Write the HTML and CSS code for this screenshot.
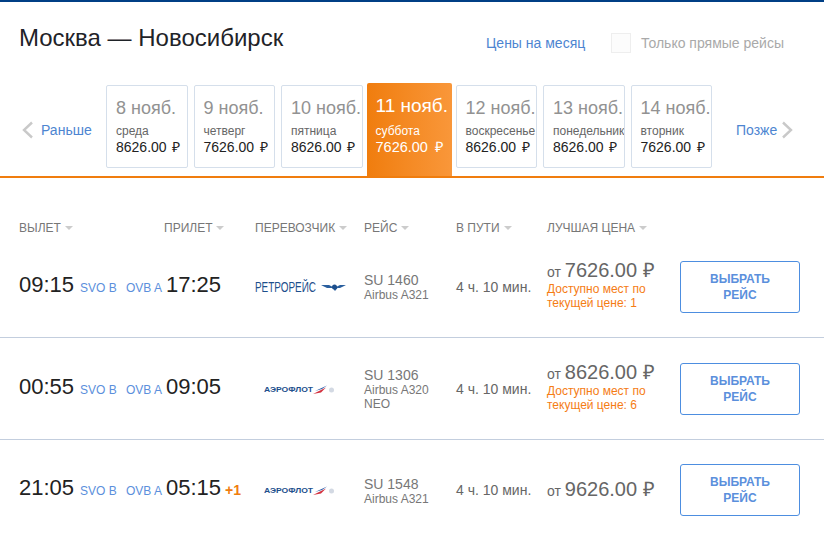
FILE: index.html
```html
<!DOCTYPE html>
<html lang="ru">

<head>
    <meta charset="UTF-8">
    <title>Москва — Новосибирск</title>
    <link rel="stylesheet" href="styles.css">
</head>

<body>
    <div class="top">
        <div class="top-head">
            <h1>Москва — Новосибирск</h1>
            <a class="month-link">Цены на месяц</a>
            <span class="check"></span>
            <span class="check-label">Только прямые рейсы</span>
        </div>

        <div class="dates">
            <a class="nav nav-prev">
                <svg width="13" height="18" viewBox="0 0 13 18"><path d="M11 1.500 3 9l8 7.500" fill="none" stroke="#c9c9c9" stroke-width="2.400"/></svg>
                Раньше
            </a>
            <div class="day">
                <div class="day-date">8 нояб.</div>
                <div class="day-name">среда</div>
                <div class="day-price">8626.00 ₽</div>
            </div>
            <div class="day">
                <div class="day-date">9 нояб.</div>
                <div class="day-name">четверг</div>
                <div class="day-price">7626.00 ₽</div>
            </div>
            <div class="day">
                <div class="day-date">10 нояб.</div>
                <div class="day-name">пятница</div>
                <div class="day-price">8626.00 ₽</div>
            </div>
            <div class="day day-active">
                <div class="day-date">11 нояб.</div>
                <div class="day-name">суббота</div>
                <div class="day-price">7626.00 ₽</div>
            </div>
            <div class="day">
                <div class="day-date">12 нояб.</div>
                <div class="day-name">воскресенье</div>
                <div class="day-price">8626.00 ₽</div>
            </div>
            <div class="day">
                <div class="day-date">13 нояб.</div>
                <div class="day-name">понедельник</div>
                <div class="day-price">8626.00 ₽</div>
            </div>
            <div class="day">
                <div class="day-date">14 нояб.</div>
                <div class="day-name">вторник</div>
                <div class="day-price">7626.00 ₽</div>
            </div>
            <a class="nav nav-next">
                Позже
                <svg width="13" height="18" viewBox="0 0 13 18"><path d="M2 1.500 10 9l-8 7.500" fill="none" stroke="#c9c9c9" stroke-width="2.400"/></svg>
            </a>
        </div>
    </div>

    <div class="list-head">
        <span class="sort">ВЫЛЕТ</span>
        <span class="sort">ПРИЛЕТ</span>
        <span class="sort">ПЕРЕВОЗЧИК</span>
        <span class="sort">РЕЙС</span>
        <span class="sort">В ПУТИ</span>
        <span class="sort">ЛУЧШАЯ ЦЕНА</span>
    </div>

    <div class="flight">
        <div class="times"><span class="time">09:15</span><a class="code">SVO B</a></div>
        <div class="times"><a class="code">OVB A</a><span class="time">17:25</span></div>
        <div class="logo">
            <svg width="92" height="16" viewBox="0 0 92 16">
                <text x="0" y="13" class="retro-text" textLength="61" lengthAdjust="spacingAndGlyphs">РЕТРОРЕЙС</text>
                <path d="M66 6h8l3 1.500h5l3-1.500h6l-6 3h-2.500l-2.500 3-2.500-3H72z" fill="#2a5f9e"/>
                <circle cx="79.500" cy="8" r="2.500" fill="#1d4f8c"/>
            </svg>
        </div>
        <div class="info">SU 1460<small>Airbus A321</small></div>
        <div class="duration">4 ч. 10 мин.</div>
        <div class="price">
            <div>от <b>7626.00 ₽</b></div>
            <div class="seats">Доступно мест по текущей цене: 1</div>
        </div>
        <a class="pick">ВЫБРАТЬ<br>РЕЙС</a>
    </div>

    <div class="flight">
        <div class="times"><span class="time">00:55</span><a class="code">SVO B</a></div>
        <div class="times"><a class="code">OVB A</a><span class="time">09:05</span></div>
        <div class="logo">
            <svg width="92" height="16" viewBox="0 0 92 16">
                <text x="9" y="11" class="aero-text" textLength="49" lengthAdjust="spacingAndGlyphs">АЭРОФЛОТ</text>
                <path d="M58 13 71 6.500 66 11.500z" fill="#d3323f"/>
                <path d="M60 10 72 4.500l-5 3.500z" fill="#2a5ba8"/>
                <circle cx="76.500" cy="9" r="2.500" fill="#d3d9e3"/>
            </svg>
        </div>
        <div class="info">SU 1306<small>Airbus A320<br>NEO</small></div>
        <div class="duration">4 ч. 10 мин.</div>
        <div class="price">
            <div>от <b>8626.00 ₽</b></div>
            <div class="seats">Доступно мест по текущей цене: 6</div>
        </div>
        <a class="pick">ВЫБРАТЬ<br>РЕЙС</a>
    </div>

    <div class="flight">
        <div class="times"><span class="time">21:05</span><a class="code">SVO B</a></div>
        <div class="times"><a class="code">OVB A</a><span class="time">05:15</span><span class="plus">+1</span></div>
        <div class="logo">
            <svg width="92" height="16" viewBox="0 0 92 16">
                <text x="9" y="11" class="aero-text" textLength="49" lengthAdjust="spacingAndGlyphs">АЭРОФЛОТ</text>
                <path d="M58 13 71 6.500 66 11.500z" fill="#d3323f"/>
                <path d="M60 10 72 4.500l-5 3.500z" fill="#2a5ba8"/>
                <circle cx="76.500" cy="9" r="2.500" fill="#d3d9e3"/>
            </svg>
        </div>
        <div class="info">SU 1548<small>Airbus A321</small></div>
        <div class="duration">4 ч. 10 мин.</div>
        <div class="price price-only">
            <div>от <b>9626.00 ₽</b></div>
        </div>
        <a class="pick">ВЫБРАТЬ<br>РЕЙС</a>
    </div>
</body>

</html>
```

FILE: styles.css
```css
* {
    margin: 0;
    padding: 0;
    box-sizing: border-box;
}

body {
    font-family: "Liberation Sans", Arial, sans-serif;
    background: white;
    color: #222;
    height: 534px;
    overflow: hidden;
}

.top {
    border-top: 2px solid #003f85;
    border-bottom: 2px solid #f07d0e;
    height: 178px;
}

.top-head {
    display: flex;
    align-items: center;
    height: 72px;
    padding-left: 19px;
}

h1 {
    font-size: 24px;
    font-weight: 400;
    color: #1f2328;
    width: 467px;
}

.month-link {
    font-size: 14px;
    color: #4d85d1;
    width: 125px;
    padding-top: 10px;
}

.check {
    width: 20px;
    height: 20px;
    border: 1px solid #eee;
    background: #fcfcfc;
    margin-top: 10px;
}

.check-label {
    font-size: 14px;
    color: #a9a9a9;
    margin-left: 10px;
    padding-top: 10px;
}

.dates {
    display: flex;
    align-items: flex-start;
    height: 102px;
    padding-top: 11px;
}

.nav {
    display: flex;
    align-items: center;
    gap: 7px;
    font-size: 14px;
    color: #4d85d1;
    height: 83px;
    padding-top: 6px;
}

.nav-prev {
    width: 106px;
    padding-left: 21px;
}

.nav-next {
    padding-left: 24px;
    gap: 4px;
}

.day {
    width: 81.5px;
    height: 83px;
    margin-right: 6px;
    border: 1px solid #d5dfeb;
    border-radius: 2px;
    padding: 10px 0 0 9px;
    overflow: hidden;
    white-space: nowrap;
}

.day:nth-of-type(3) {
    margin-right: 4px;
}

.day:nth-of-type(7) {
    margin-right: 0;
}

.day-date {
    font-size: 18px;
    line-height: 24px;
    color: #929292;
}

.day-name {
    font-size: 12px;
    line-height: 15px;
    color: #666;
    margin-top: 4px;
}

.day-price {
    font-size: 14px;
    line-height: 16px;
    word-spacing: 2px;
    color: #222;
}

.day-active {
    width: 85px;
    height: 93px;
    margin: -2px 4px 0 0;
    border: 0;
    border-radius: 2px 2px 0 0;
    padding: 11px 0 0 9px;
    background: linear-gradient(90deg, #f07d0e 0%, #f9973a 100%);
}

.day-active .day-date {
    font-size: 19px;
    color: white;
}

.day-active .day-name {
    color: white;
    margin-top: 6px;
}

.day-active .day-price {
    font-size: 14.500px;
    word-spacing: 3px;
    color: white;
}

.list-head {
    display: grid;
    grid-template-columns: 145px 91px 109px 92px 91px 1fr;
    padding: 43px 0 0 19px;
    height: 58px;
}

.sort {
    font-size: 12px;
    line-height: 14px;
    color: #777;
}

.sort::after {
    content: "";
    display: inline-block;
    border: 4px solid transparent;
    border-top-color: #ccc;
    border-bottom: 0;
    margin-left: 4px;
    vertical-align: 2px;
}

.flight {
    display: grid;
    grid-template-columns: 107px 129px 109px 92px 91px 133px 120px;
    align-items: center;
    height: 102px;
    padding-left: 19px;
    border-bottom: 1px solid #c3cede;
}

.flight:last-child {
    height: 100px;
    border-bottom: 0;
}

.times {
    display: flex;
    align-items: baseline;
    margin-top: -4px;
    white-space: nowrap;
}

.time {
    font-size: 22px;
    color: #222;
}

.code {
    font-size: 12px;
    color: #5b8fdc;
    margin: 0 4px 0 6px;
}

.times .code:first-child {
    margin: 0 4px 0 0;
}

.plus {
    font-size: 14px;
    font-weight: 700;
    color: #f07d0e;
    margin-left: 4px;
}

.logo {
    display: flex;
}

.retro-text {
    font-size: 15px;
    font-family: "Liberation Sans", sans-serif;
    fill: #1d4f8c;
}

.aero-text {
    font-size: 8px;
    font-weight: 700;
    font-family: "Liberation Sans", sans-serif;
    fill: #1d4f8c;
}

.info {
    font-size: 14px;
    line-height: 15px;
    color: #777;
    margin-top: 2px;
}

.info small {
    display: block;
    font-size: 12px;
    line-height: 14px;
    color: #777;
}

.duration {
    font-size: 14px;
    color: #666;
}

.price {
    font-size: 14px;
    color: #666;
    margin-top: -8px;
}

.price-only {
    margin-top: -4px;
}

.price b {
    font-size: 20px;
    font-weight: 400;
    color: #666;
}

.seats {
    font-size: 12px;
    line-height: 14px;
    margin-top: -1px;
    color: #f57c14;
    width: 115px;
}

.pick {
    display: block;
    height: 52px;
    width: 120px;
    border: 1px solid #4d8ee0;
    border-radius: 3px;
    text-align: center;
    font-size: 12px;
    font-weight: 700;
    line-height: 16px;
    padding-top: 9px;
    color: #5b8fdc;
}
```
